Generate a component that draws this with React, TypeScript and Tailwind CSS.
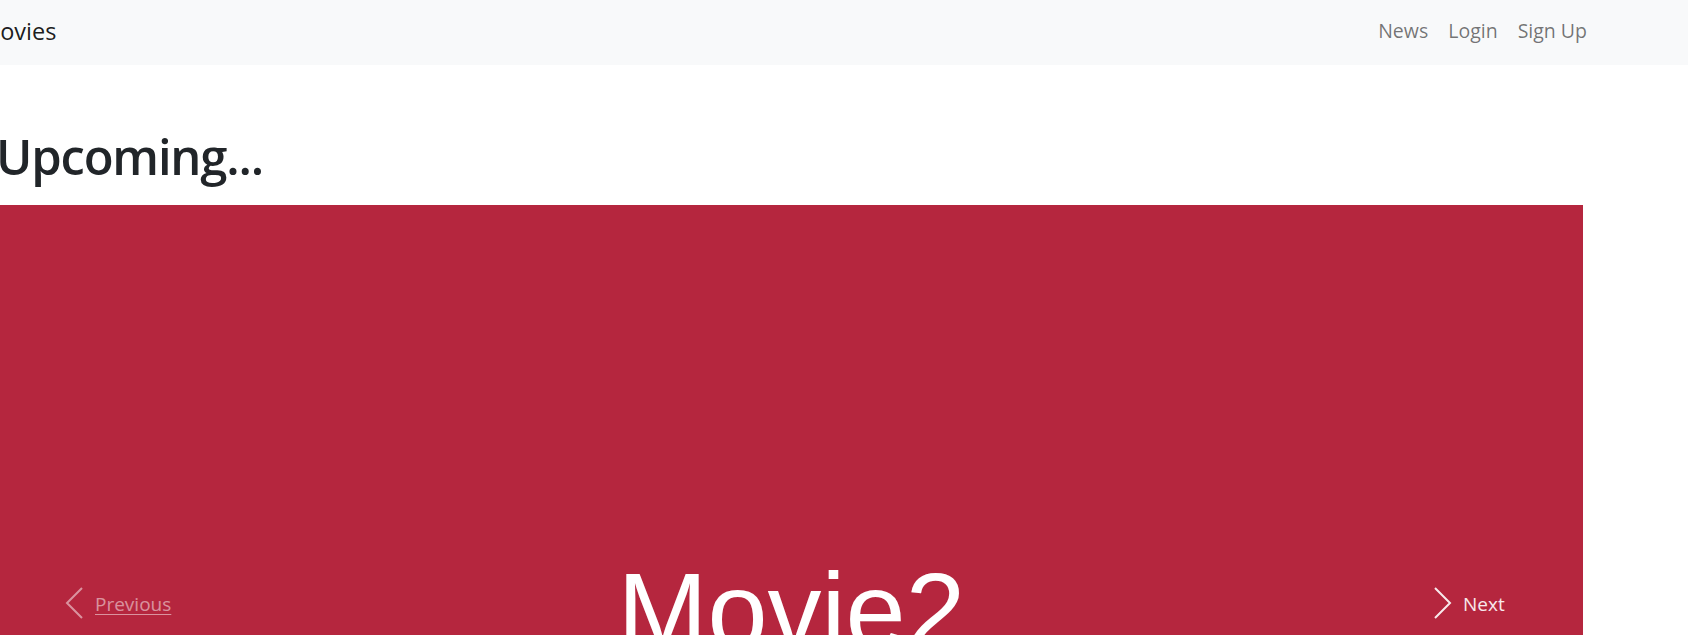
import React from "react";

const font = { fontFamily: '"Open Sans", "Noto Sans", sans-serif' };

function Chevron({ dir }: { dir: "left" | "right" }) {
  const pts = dir === "left" ? "17,1 2,16 17,31" : "1,1 16,16 1,31";
  return (
    <svg width="18" height="32" viewBox="0 0 18 32" fill="none" className="shrink-0">
      <polyline points={pts} stroke="currentColor" strokeWidth="2" strokeLinejoin="miter" />
    </svg>
  );
}

export default function App() {
  return (
    <div className="w-[1688px] h-[635px] overflow-hidden bg-white" style={font}>
      {/* Navbar */}
      <nav className="h-[65px] bg-[#f8f9fa] flex items-center justify-between pr-[91px]">
        <a className="ml-[-21px] text-[23.5px] text-black/90 leading-[32px] pb-[3px]">Movies</a>
        <ul className="flex items-center pb-[3px]">
          {["News", "Login", "Sign Up"].map((l) => (
            <li key={l}>
              <a className="block px-[10px] text-[19.5px] leading-[26px] text-black/55">{l}</a>
            </li>
          ))}
        </ul>
      </nav>

      {/* Heading */}
      <h1 className="ml-[-4px] mt-[62px] mb-[20px] text-[49px] font-semibold leading-[58px] tracking-[-1.2px] text-[#212529]">
        Upcoming...
      </h1>

      {/* Carousel */}
      <div className="relative w-[1583px] h-[796px] bg-[#b5263e] flex items-center justify-center">
        <span
          className="pt-[16px] text-[108px] leading-none text-white"
          style={{ fontFamily: '"Liberation Sans", Arial, sans-serif' }}
        >
          Movie2
        </span>

        <a className="absolute left-[65px] top-0 bottom-0 flex items-center gap-[12px] text-white/50">
          <Chevron dir="left" />
          <span className="text-[19px] underline underline-offset-[3px] pt-[2px]">Previous</span>
        </a>

        <a className="absolute left-[1434px] top-0 bottom-0 flex items-center gap-[11px] text-white/90">
          <Chevron dir="right" />
          <span className="text-[19px] pt-[2px]">Next</span>
        </a>
      </div>
    </div>
  );
}
